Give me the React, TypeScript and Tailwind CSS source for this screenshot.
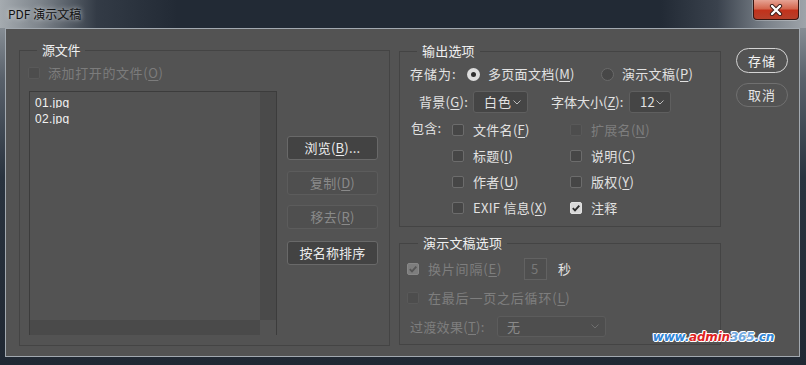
import React from 'react';

// mnemonic letter, e.g. (M) with the letter underlined
const Mn = ({ k }: { k: string }) => (
  <>
    (<span className="underline underline-offset-[2px] decoration-1">{k}</span>)
  </>
);

type BoxState = 'on' | 'off' | 'dis' | 'dison';

const Box = ({ state }: { state: BoxState }) => {
  const cls = {
    on: 'bg-[#d8d8d8] border-[#e2e2e2]',
    off: 'bg-[#464646] border-[#6c6c6c]',
    dis: 'bg-[#4d4d4d] border-[#595959]',
    dison: 'bg-[#7d7d7d] border-[#878787]',
  }[state];
  return (
    <span className={`flex items-center justify-center w-[12px] h-[12px] shrink-0 rounded-[2px] border ${cls}`}>
      {(state === 'on' || state === 'dison') && (
        <svg width="10" height="10" viewBox="0 0 10 10">
          <path
            d="M1.8 5.1 L4 7.3 L8.3 2.6"
            fill="none"
            stroke={state === 'on' ? '#2a2a2a' : '#565656'}
            strokeWidth="1.9"
          />
        </svg>
      )}
    </span>
  );
};

const Radio = ({ on }: { on?: boolean }) =>
  on ? (
    <span className="flex items-center justify-center w-[13px] h-[13px] shrink-0 rounded-full bg-[#dedede]">
      <span className="w-[5px] h-[5px] rounded-full bg-[#2f2f2f]" />
    </span>
  ) : (
    <span className="w-[13px] h-[13px] shrink-0 rounded-full bg-[#474747] border border-[#6a6a6a]" />
  );

const Chevron = ({ dim }: { dim?: boolean }) => (
  <svg width="8" height="5" viewBox="0 0 8 5">
    <path d="M0.5 0.5 L4 4 L7.5 0.5" fill="none" stroke={dim ? '#6e6e6e' : '#bcbcbc'} strokeWidth="1" />
  </svg>
);

const Btn = ({ children, disabled }: { children: React.ReactNode; disabled?: boolean }) => (
  <div
    className={
      disabled
        ? 'flex items-center justify-center h-[24px] rounded-[3px] border border-[#5c5c5c] bg-[#4f4f4f] text-[13px] tracking-[0.2px] text-[#8a8a8a]'
        : 'flex items-center justify-center h-[24px] rounded-[3px] border border-[#696969] bg-[#434343] text-[13px] tracking-[0.2px] text-[#ececec]'
    }
  >
    {children}
  </div>
);

const CheckRow = ({ state, children }: { state: BoxState; children: React.ReactNode }) => (
  <div className="flex items-center gap-[9px]">
    <Box state={state} />
    <span className={state === 'dis' ? 'text-[#7e7e7e]' : 'text-[#e2e2e2]'}>{children}</span>
  </div>
);

// list rows clip the descenders, like the original list control does
const FileItem = ({ name }: { name: string }) => (
  <div className="h-[16px]">
    <div className="h-[10px] overflow-hidden font-['Liberation_Sans',sans-serif] text-[12px] leading-[11px] text-[#f2f2f2]">
      {name}
    </div>
  </div>
);

export default function App() {
  return (
    <div className="w-[806px] h-[365px] flex flex-col bg-[#222b36] font-['Noto_Sans_CJK_SC','Noto_Sans',sans-serif] overflow-hidden select-none">
      {/* Title bar */}
      <div className="h-[28px] shrink-0 flex items-start justify-between bg-[linear-gradient(to_right,#a5abb0_0%,#7d848b_5%,#333b46_12%,#222a35_22%,#222a35_82%,#3a424d_89%,#7a8189_95%,#9ea4aa_100%)]">
        <span className="pl-[8px] pt-[5px] text-[12px] leading-[18px] text-[#111] [text-shadow:0_0_5px_#e4e7ea]">
          PDF 演示文稿
        </span>
        <div className="mr-[7px] w-[46px] h-[20px] flex items-center justify-center rounded-b-[4px] border border-t-0 border-[#3a1510] bg-[linear-gradient(to_bottom,#e6a394_0%,#d4674f_45%,#c1321c_55%,#b6402b_100%)] shadow-[0_0_0_1px_rgba(255,255,255,0.25)]">
          <svg width="14" height="12" viewBox="0 0 14 12">
            <path d="M3 2 L11 10 M11 2 L3 10" stroke="#3b1c18" strokeWidth="4.2" strokeLinecap="round" />
            <path d="M3 2 L11 10 M11 2 L3 10" stroke="#ffffff" strokeWidth="2.4" strokeLinecap="round" />
          </svg>
        </div>
      </div>

      {/* Frame */}
      <div className="flex-1 flex flex-col pl-[5px] pr-[6px] pb-[8px] bg-[linear-gradient(to_bottom,#868d94_0px,#59616b_50px,#29333f_150px,#202833_100%)]">
        <div className="relative flex-1 flex items-start border border-[#a2a9b0] bg-[#535353] pl-[13px] pt-[13px] text-[13px] leading-[20px] tracking-[0.3px] text-[#e2e2e2]">
          {/* 源文件 */}
          <fieldset className="w-[371px] border border-[#444444] px-0 pb-[10px]">
            <legend className="ml-[17px] px-[5px] text-[13px] leading-[16px] tracking-[-0.3px] text-[#f0f0f0]">源文件</legend>
            <div className="mt-[7px] h-[16px] pl-[8px] flex items-center gap-[8px]">
              <Box state="dis" />
              <span className="text-[#7c7c7c] tracking-[0.6px]">
                添加打开的文件<Mn k="O" />
              </span>
            </div>
            <div className="mt-[10px] pl-[9px] flex items-start">
              <div className="w-[248px] h-[244px] grid grid-cols-[1fr_16px] grid-rows-[1fr_15px] border-t border-l border-r border-[#3c3c3c]">
                <div className="pl-[5px] pt-[6px]">
                  <FileItem name="01.jpg" />
                  <FileItem name="02.jpg" />
                </div>
                <div className="bg-[#4a4a4a]" />
                <div className="bg-[#4a4a4a]" />
                <div />
              </div>
              <div className="ml-[10px] w-[91px] flex flex-col">
                <div className="mt-[45px]">
                  <Btn>
                    浏览<Mn k="B" />...
                  </Btn>
                </div>
                <div className="mt-[11px]">
                  <Btn disabled>
                    复制<Mn k="D" />
                  </Btn>
                </div>
                <div className="mt-[10px]">
                  <Btn disabled>
                    移去<Mn k="R" />
                  </Btn>
                </div>
                <div className="mt-[12px]">
                  <Btn>按名称排序</Btn>
                </div>
              </div>
            </div>
          </fieldset>

          {/* Right column */}
          <div className="ml-[9px] mt-[1px] w-[322px] flex flex-col gap-[8px]">
            <fieldset className="border border-[#444444] px-0 pb-[5px]">
              <legend className="ml-[17px] px-[5px] text-[13px] leading-[16px] tracking-[0.2px] text-[#f0f0f0]">输出选项</legend>
              <div className="mt-[5px] h-[20px] pl-[10px] flex items-center">
                <span className="w-[57px] tracking-[1px]">存储为:</span>
                <div className="w-[134px] flex items-center gap-[8px]">
                  <Radio on />
                  <span>
                    多页面文档<Mn k="M" />
                  </span>
                </div>
                <div className="flex items-center gap-[8px]">
                  <Radio />
                  <span>
                    演示文稿<Mn k="P" />
                  </span>
                </div>
              </div>
              <div className="mt-[7px] h-[22px] pl-[19px] flex items-center">
                <span className="w-[54px]">
                  背景<Mn k="G" />:
                </span>
                <div className="w-[55px] h-[22px] flex items-center justify-between rounded-[3px] border border-[#5f5f5f] bg-[#454545] pl-[10px] pr-[6px]">
                  <span className="tracking-[1px]">白色</span>
                  <Chevron />
                </div>
                <span className="ml-[23px] w-[78px] tracking-[0px]">
                  字体大小<Mn k="Z" />:
                </span>
                <div className="w-[42px] h-[22px] flex items-center justify-between rounded-[3px] border border-[#5f5f5f] bg-[#454545] pl-[10px] pr-[6px]">
                  <span>12</span>
                  <Chevron />
                </div>
              </div>
              <div className="mt-[4px] pl-[11px] grid grid-cols-[41px_118px_1fr] auto-rows-[26px] items-center">
                <span className="self-start pt-[1px]">包含:</span>
                <CheckRow state="off">
                  文件名<Mn k="F" />
                </CheckRow>
                <CheckRow state="dis">
                  扩展名<Mn k="N" />
                </CheckRow>
                <span />
                <CheckRow state="off">
                  标题<Mn k="I" />
                </CheckRow>
                <CheckRow state="off">
                  说明<Mn k="C" />
                </CheckRow>
                <span />
                <CheckRow state="off">
                  作者<Mn k="U" />
                </CheckRow>
                <CheckRow state="off">
                  版权<Mn k="Y" />
                </CheckRow>
                <span />
                <CheckRow state="off">
                  EXIF 信息<Mn k="X" />
                </CheckRow>
                <CheckRow state="on">注释</CheckRow>
              </div>
            </fieldset>

            <fieldset className="border border-[#444444] px-0 pb-[7px]">
              <legend className="ml-[18px] px-[5px] text-[13px] leading-[16px] tracking-[0.2px] text-[#f0f0f0]">演示文稿选项</legend>
              <div className="mt-[7px] h-[22px] pl-[7px] flex items-center">
                <Box state="dison" />
                <span className="ml-[9px] w-[96px] text-[#7e7e7e] tracking-[0.8px]">
                  换片间隔<Mn k="E" />
                </span>
                <div className="w-[23px] h-[22px] flex items-center pl-[6px] border border-[#626262] bg-[#4f4f4f] text-[#787878]">
                  5
                </div>
                <span className="ml-[11px]">秒</span>
              </div>
              <div className="mt-[8px] h-[20px] pl-[7px] flex items-center">
                <Box state="dis" />
                <span className="ml-[9px] text-[#7e7e7e] tracking-[0.8px]">
                  在最后一页之后循环<Mn k="L" />
                </span>
              </div>
              <div className="mt-[8px] h-[21px] pl-[10px] flex items-center">
                <span className="w-[87px] text-[#7e7e7e]">
                  过渡效果<Mn k="T" />:
                </span>
                <div className="w-[109px] h-[21px] flex items-center justify-between rounded-[3px] border border-[#5c5c5c] bg-[#4e4e4e] pl-[9px] pr-[6px] text-[#8a8a8a]">
                  <span>无</span>
                  <Chevron dim />
                </div>
              </div>
            </fieldset>
          </div>

          {/* Save / Cancel */}
          <div className="ml-[15px] mt-[6px] w-[52px] flex flex-col gap-[10px]">
            <div className="h-[25px] flex items-center justify-center rounded-full border-[1.5px] border-[#d4d4d4] text-[13px] tracking-[1px] text-[#f2f2f2]">
              存储
            </div>
            <div className="h-[24px] flex items-center justify-center rounded-full border border-[#707070] text-[13px] tracking-[1px] text-[#e6e6e6]">
              取消
            </div>
          </div>

          {/* watermark */}
          <div className="absolute right-[25px] bottom-[12px] font-['DejaVu_Sans',sans-serif] text-[12px] leading-[14px] font-bold italic tracking-[-0.2px] [text-shadow:1px_0_#fff,-1px_0_#fff,0_1px_#fff,0_-1px_#fff,1px_1px_#fff,-1px_-1px_#fff]">
            <span className="text-[#2f86d8]">www.</span>
            <span className="text-[#e0231f]">admin</span>
            <span className="text-[#6fa8e0]">365</span>
            <span className="text-[#2f86d8]">.cn</span>
          </div>
        </div>
      </div>
    </div>
  );
}
